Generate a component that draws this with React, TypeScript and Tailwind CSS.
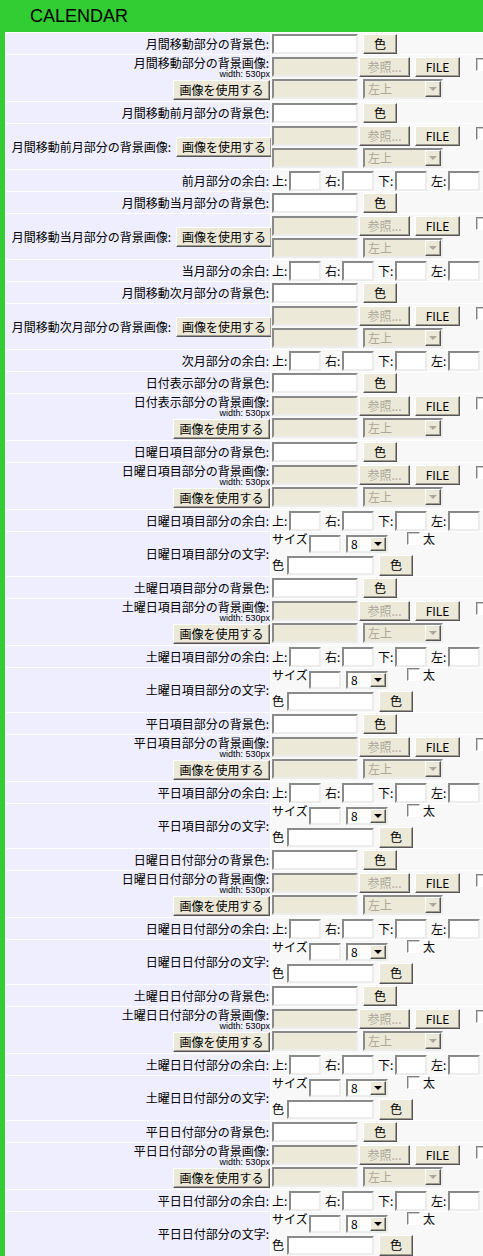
import clsx from 'clsx';

type Kind = 'color' | 'image' | 'imageInline' | 'margin' | 'text';
type Row = { kind: Kind; label: string };

const groups = ['日曜日項目', '土曜日項目', '平日項目', '日曜日日付', '土曜日日付', '平日日付'];

const rows: Row[] = [
  { kind: 'color', label: '月間移動部分の背景色' },
  { kind: 'image', label: '月間移動部分の背景画像' },
  { kind: 'color', label: '月間移動前月部分の背景色' },
  { kind: 'imageInline', label: '月間移動前月部分の背景画像' },
  { kind: 'margin', label: '前月部分の余白' },
  { kind: 'color', label: '月間移動当月部分の背景色' },
  { kind: 'imageInline', label: '月間移動当月部分の背景画像' },
  { kind: 'margin', label: '当月部分の余白' },
  { kind: 'color', label: '月間移動次月部分の背景色' },
  { kind: 'imageInline', label: '月間移動次月部分の背景画像' },
  { kind: 'margin', label: '次月部分の余白' },
  { kind: 'color', label: '日付表示部分の背景色' },
  { kind: 'image', label: '日付表示部分の背景画像' },
  ...groups.flatMap((g): Row[] => [
    { kind: 'color', label: `${g}部分の背景色` },
    { kind: 'image', label: `${g}部分の背景画像` },
    { kind: 'margin', label: `${g}部分の余白` },
    { kind: 'text', label: `${g}部分の文字` },
  ]),
];

const rowHeight: Record<Kind, string> = {
  color: 'h-[21px]',
  image: 'h-[46px]',
  imageInline: 'h-[45px]',
  margin: 'h-[21px]',
  text: 'h-[44px]',
};

const inset = 'border-2 border-t-[#8a8a8a] border-l-[#8a8a8a] border-r-[#ececec] border-b-[#ececec]';
const outset =
  'border border-t-white border-l-white border-r-[#555555] border-b-[#555555] shadow-[inset_-1px_-1px_0_#a09d90]';

function TextBox({ className, disabled }: { className?: string; disabled?: boolean }) {
  return (
    <input
      type="text"
      disabled={disabled}
      className={clsx('box-border outline-none', inset, disabled ? 'bg-[#ece9d8]' : 'bg-white', className)}
    />
  );
}

function Btn({ children, className, disabled }: { children: string; className?: string; disabled?: boolean }) {
  return (
    <button
      type="button"
      disabled={disabled}
      className={clsx(
        'box-border flex shrink-0 items-center justify-center bg-[#ece9d8] text-[12px] leading-none',
        outset,
        disabled ? 'text-[#aca899]' : 'text-black',
        className
      )}
    >
      {children}
    </button>
  );
}

function Arrow({ disabled }: { disabled?: boolean }) {
  return (
    <span className={clsx('flex h-full w-[16px] shrink-0 items-center justify-center bg-[#ece9d8]', outset)}>
      <span
        className={clsx(
          'h-0 w-0 border-x-[4px] border-t-[4px] border-x-transparent',
          disabled ? 'border-t-[#aca899]' : 'border-t-black'
        )}
      />
    </span>
  );
}

function Select({ value, className, disabled }: { value: string; className?: string; disabled?: boolean }) {
  return (
    <div
      className={clsx(
        'box-border flex shrink-0 items-stretch',
        inset,
        disabled ? 'bg-[#ece9d8] text-[#aca899]' : 'bg-white text-black',
        className
      )}
    >
      <span className="flex flex-1 items-center pl-[3px]">{value}</span>
      <Arrow disabled={disabled} />
    </div>
  );
}

function Check({ className }: { className?: string }) {
  return (
    <span
      className={clsx(
        'box-border block h-[13px] w-[13px] shrink-0 border border-t-[#808080] border-l-[#808080] border-r-white border-b-white bg-white shadow-[inset_1px_1px_0_#c8c8c8]',
        className
      )}
    />
  );
}

function ColorRight() {
  return (
    <div className="flex items-center pl-px">
      <TextBox className="h-[20px] w-[86px]" />
      <Btn className="ml-[5px] h-[20px] w-[34px]">色</Btn>
    </div>
  );
}

function ImageRight() {
  return (
    <div className="flex flex-col justify-center gap-[2px] pl-px">
      <div className="flex items-start">
        <TextBox disabled className="h-[20px] w-[86px]" />
        <Btn disabled className="ml-px h-[20px] w-[51px]">
          参照...
        </Btn>
        <Btn className="ml-[5px] h-[20px] w-[45px]">FILE</Btn>
        <Check className="ml-[16px] mt-px" />
      </div>
      <div className="flex items-center">
        <TextBox disabled className="h-[20px] w-[86px]" />
        <Select disabled value="左上" className="ml-[5px] h-[20px] w-[80px]" />
      </div>
    </div>
  );
}

function MarginRight() {
  return (
    <div className="flex items-center pl-px">
      {['上', '右', '下', '左'].map((side, i) => (
        <div key={side} className={clsx('flex items-center', i > 0 && 'ml-[4px]')}>
          <span className="w-[16px]">{side}:</span>
          <TextBox className="ml-px h-[20px] w-[32px]" />
        </div>
      ))}
    </div>
  );
}

function TextRight() {
  return (
    <div className="flex flex-col pl-px">
      <div className="flex h-[22px] items-start">
        <span className="w-[36px]">サイズ</span>
        <TextBox className="ml-px mt-[3px] h-[18px] w-[32px]" />
        <Select value="8" className="ml-[5px] mt-[3px] h-[18px] w-[42px]" />
        <Check className="ml-[19px]" />
        <span className="ml-[3px]">太</span>
      </div>
      <div className="flex h-[22px] items-center">
        <span>色</span>
        <TextBox className="ml-[3px] h-[19px] w-[87px]" />
        <Btn className="ml-[5px] h-[21px] w-[34px]">色</Btn>
      </div>
    </div>
  );
}

function Label({ row }: { row: Row }) {
  if (row.kind === 'image') {
    return (
      <div className="flex flex-col items-end justify-center bg-[#eeeeff]">
        <span className="pr-px">{row.label}:</span>
        <span className="font-['Liberation_Sans',sans-serif] text-[9px] leading-[9px]">width: 530px</span>
        <Btn className="mt-px h-[20px] w-[97px]">画像を使用する</Btn>
      </div>
    );
  }
  if (row.kind === 'imageInline') {
    return (
      <div className="flex items-center justify-end bg-[#eeeeff]">
        <span>{row.label}:</span>
        <Btn className="-mr-[2px] ml-[5px] h-[20px] w-[96px]">画像を使用する</Btn>
      </div>
    );
  }
  return (
    <div className="flex items-center justify-end bg-[#eeeeff] pr-px">
      <span>{row.label}:</span>
    </div>
  );
}

function Right({ kind }: { kind: Kind }) {
  const body = {
    color: <ColorRight />,
    image: <ImageRight />,
    imageInline: <ImageRight />,
    margin: <MarginRight />,
    text: <TextRight />,
  }[kind];
  return <div className="flex flex-col justify-center bg-[#f8f8f8]">{body}</div>;
}

export default function App() {
  return (
    <div className="h-[1256px] w-[483px] overflow-hidden bg-[#32cd32] font-['Noto_Sans_CJK_JP',sans-serif] text-[12px] leading-[14px] text-black">
      <div className="flex h-[32px] items-center pl-[30px] font-['Liberation_Sans',sans-serif] text-[18px]">CALENDAR</div>
      <div className="ml-[5px] flex w-[560px] flex-col gap-px bg-white p-px">
        {rows.map((row) => (
          <div key={row.label} className={clsx('grid grid-cols-[264px_1fr] gap-px', rowHeight[row.kind])}>
            <Label row={row} />
            <Right kind={row.kind} />
          </div>
        ))}
      </div>
    </div>
  );
}
